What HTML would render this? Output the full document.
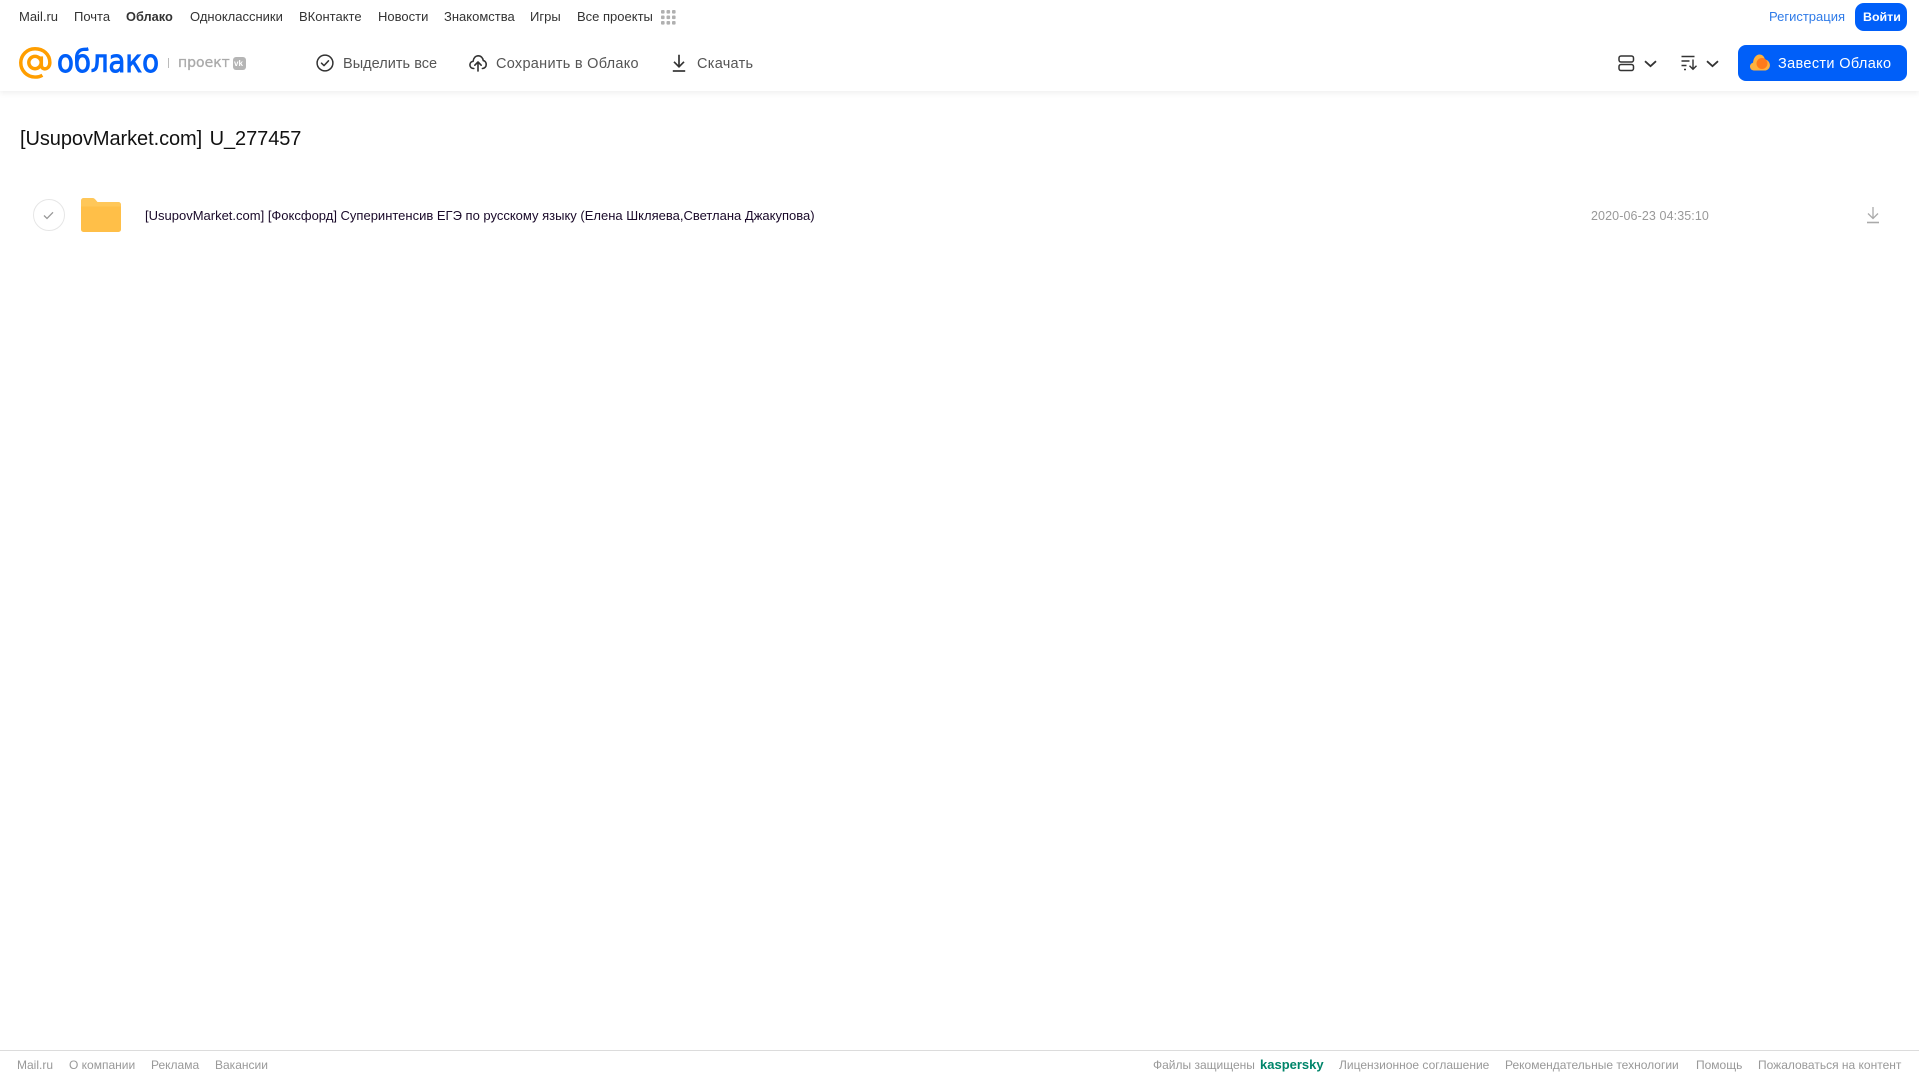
<!DOCTYPE html>
<html lang="ru"><head><meta charset="utf-8"><title>Облако</title>
<style>
html,body{margin:0;padding:0;background:#fff;width:1919px;height:1079px;overflow:hidden;font-family:"Liberation Sans",Arial,sans-serif}
.t{position:absolute;white-space:nowrap;line-height:18px}
.n{top:8px;font-size:13px;color:#333;}
.a{top:55px;font-size:14.5px;color:#555;}
.f{top:1056px;font-size:12px;color:#999}
svg{position:absolute;overflow:visible}
</style></head><body>
<div style="position:absolute;left:0;top:0;width:1919px;height:91px;background:#fff;box-shadow:0 2px 6px rgba(0,0,0,.07)"></div>

<span class="t n" style="left:19px">Mail.ru</span>
<span class="t n" style="left:74px">Почта</span>
<span class="t n" style="left:126px;font-weight:bold;font-size:12.8px">Облако</span>
<span class="t n" style="left:190px">Одноклассники</span>
<span class="t n" style="left:299px">ВКонтакте</span>
<span class="t n" style="left:378px">Новости</span>
<span class="t n" style="left:444px">Знакомства</span>
<span class="t n" style="left:530px">Игры</span>
<span class="t n" style="left:577px">Все проекты</span>
<svg style="left:661px;top:10px" width="15" height="15" fill="#b0b0b0"><rect x="0" y="0" width="3.6" height="3.6" rx="1"/><rect x="5.5" y="0" width="3.6" height="3.6" rx="1"/><rect x="11" y="0" width="3.6" height="3.6" rx="1"/><rect x="0" y="5.5" width="3.6" height="3.6" rx="1"/><rect x="5.5" y="5.5" width="3.6" height="3.6" rx="1"/><rect x="11" y="5.5" width="3.6" height="3.6" rx="1"/><rect x="0" y="11" width="3.6" height="3.6" rx="1"/><rect x="5.5" y="11" width="3.6" height="3.6" rx="1"/><rect x="11" y="11" width="3.6" height="3.6" rx="1"/></svg>

<span class="t" style="left:1769px;top:8px;font-size:13px;color:#2f7be8">Регистрация</span>
<div style="position:absolute;left:1855px;top:3px;width:52px;height:28px;background:#005ff9;border-radius:9px"></div>
<span class="t" style="left:1863px;top:8px;font-size:12.4px;color:#fff;font-weight:bold">Войти</span>

<!-- logo -->
<svg style="left:19px;top:47px" width="33" height="32" viewBox="0 0 34 33" fill="none" stroke="#ff9e00" stroke-width="3.6"><circle cx="16.5" cy="16" r="6.4"/><path d="M23 9.7v8.6c0 2.8 1.6 4.2 3.600 4.200 3 0 5.200-2.600 5.200-6.500C31.800 7.500 25 1.800 16.500 1.800 8.300 1.800 1.800 8.300 1.800 16.300c0 8.200 6.500 14.700 14.700 14.700 3 0 5.400-.6 7.600-1.900"/></svg>
<span class="t" style="left:57px;top:44px;font-size:31px;line-height:36px;color:#005ff9;-webkit-text-stroke:1px #005ff9;font-family:'DejaVu Sans',sans-serif;transform-origin:0 50%;transform:scaleX(.89)">облако</span>
<div style="position:absolute;left:168px;top:58px;width:1px;height:10px;background:#bbb"></div>
<span class="t" style="left:178px;top:54px;font-size:14px;color:#aaa;-webkit-text-stroke:.3px #aaa;font-family:'DejaVu Sans',sans-serif">проект</span>
<div style="position:absolute;left:233px;top:57px;width:13px;height:13px;background:#b5b5b5;border-radius:3px"></div>
<span class="t" style="left:234px;top:58px;font-size:8px;line-height:11px;color:#fff;font-weight:bold">vk</span>

<!-- actions -->
<svg style="left:316px;top:54px" width="18" height="18" viewBox="0 0 18 18" fill="none" stroke="#333" stroke-width="1.500"><circle cx="9" cy="9" r="7.900"/><path d="M5.500 9.200l2.500 2.400 4.500-4.800" stroke-linecap="round" stroke-linejoin="round"/></svg>
<span class="t a" style="left:343px;letter-spacing:.03px">Выделить все</span>
<svg style="left:469px;top:54px" width="18" height="18" viewBox="0 0 18 18" fill="none" stroke="#333" stroke-width="1.600" stroke-linecap="round" stroke-linejoin="round"><path d="M4.800 14.500C2.500 14.500.9 13 .9 10.900c0-2 1.400-3.400 3.200-3.600C4.500 4 6.500 1.800 9.300 1.800c2.600 0 4.600 2 5 4.800 1.700.3 2.900 1.900 2.900 3.900 0 2.300-1.600 4-3.800 4"/><path d="M9 17V8.200M5.800 11.200L9 8l3.200 3.200"/></svg>
<span class="t a" style="left:496px;letter-spacing:.28px">Сохранить в Облако</span>
<svg style="left:672px;top:54px" width="14" height="18" viewBox="0 0 14 18" fill="none" stroke="#333" stroke-width="1.700"><path d="M7 .8v11.700M2 7.800l5 5 5-5"/><path d="M.8 17h12.400"/></svg>
<span class="t a" style="left:697px;letter-spacing:.28px">Скачать</span>

<!-- right controls -->
<svg style="left:1618px;top:55px" width="17" height="17" viewBox="0 0 17 17" fill="none" stroke="#333" stroke-width="1.500"><rect x="1" y="1" width="14.500" height="6" rx="2"/><rect x="1" y="9.500" width="14.500" height="6" rx="2"/></svg>
<svg style="left:1644px;top:60px" width="13" height="8" viewBox="0 0 13 8" fill="none" stroke="#333" stroke-width="1.800"><path d="M1 1.200l5.500 5 5.500-5"/></svg>
<svg style="left:1681px;top:55px" width="17" height="16" viewBox="0 0 17 16" fill="none" stroke="#333" stroke-width="1.400"><path d="M.5 1.500h13M.5 6h8M.5 10.500h5M3 14.500h2M12 4.500v9.500M8.500 10.800l3.500 3.500 3.500-3.500"/></svg>
<svg style="left:1706px;top:60px" width="13" height="8" viewBox="0 0 13 8" fill="none" stroke="#333" stroke-width="1.800"><path d="M1 1.200l5.500 5 5.500-5"/></svg>
<div style="position:absolute;left:1738px;top:45px;width:169px;height:36px;background:#005ff9;border-radius:8px"></div>
<svg style="left:1750px;top:54px" width="20" height="17" viewBox="0 0 20 17"><path d="M4 16.500C1.800 16.500 0 14.700 0 12.500 0 10.500 1.500 9 3 8.700 3.500 4 6 .5 9.500.5c3 0 5 2.300 5.400 5 2.800.3 5 2.800 5 5.700 0 3-2.300 5.300-5.300 5.300z" fill="#ffb13d"/><circle cx="12" cy="9.500" r="5.500" fill="#ff7a1a"/></svg>
<span class="t" style="left:1778px;top:55px;font-size:14.5px;color:#fff;letter-spacing:.35px">Завести Облако</span>

<!-- content -->
<span class="t" style="left:20px;top:126px;font-size:20px;line-height:26px;color:#111;word-spacing:2px;letter-spacing:-.07px">[UsupovMarket.com] U_277457</span>

<div style="position:absolute;left:33px;top:199px;width:30px;height:30px;border:1px solid #e6e6e6;border-radius:50%"></div>
<svg style="left:43px;top:211px" width="11" height="9" viewBox="0 0 11 9" fill="none" stroke="#999" stroke-width="1.300"><path d="M1 4.500l3 3 6-6.200"/></svg>
<svg style="left:81px;top:198px" width="40" height="34" viewBox="0 0 40 34"><path d="M0 2.500A2.500 2.500 0 0 1 2.500 0h9c1.500 0 2.500 1 3.500 2.200L16.500 4H37.500A2.500 2.500 0 0 1 40 6.500V10H0z" fill="#ffc759"/><path d="M0 8.500h40V31.500a2.500 2.500 0 0 1-2.500 2.500H2.500A2.500 2.500 0 0 1 0 31.500z" fill="#ffbf48"/></svg>
<span class="t" style="left:145px;top:207px;font-size:13px;color:#1a0a2a">[UsupovMarket.com] [Фоксфорд] Суперинтенсив ЕГЭ по русскому языку (Елена Шкляева,Светлана Джакупова)</span>
<span class="t" style="left:1591px;top:207px;font-size:12.5px;letter-spacing:.1px;color:#999">2020-06-23 04:35:10</span>
<svg style="left:1866px;top:206px" width="14" height="18" viewBox="0 0 14 18" fill="none" stroke="#aaa" stroke-width="1.300"><path d="M7 1v11.500M2 7.500l5 5 5-5"/><path d="M1 16.500h12" stroke-width="1.600"/></svg>

<!-- footer -->
<div style="position:absolute;left:0;top:1050px;width:1919px;height:1px;background:#dcdcdc"></div>
<span class="t f" style="left:17px">Mail.ru</span>
<span class="t f" style="left:69px">О компании</span>
<span class="t f" style="left:151px">Реклама</span>
<span class="t f" style="left:215px">Вакансии</span>
<span class="t f" style="left:1153px">Файлы защищены</span>
<span class="t f" style="left:1260px;color:#00856a;font-weight:bold;font-size:13px">kaspersky</span>
<span class="t f" style="left:1339px">Лицензионное соглашение</span>
<span class="t f" style="left:1505px">Рекомендательные технологии</span>
<span class="t f" style="left:1696px">Помощь</span>
<span class="t f" style="left:1758px">Пожаловаться на контент</span>
</body></html>
